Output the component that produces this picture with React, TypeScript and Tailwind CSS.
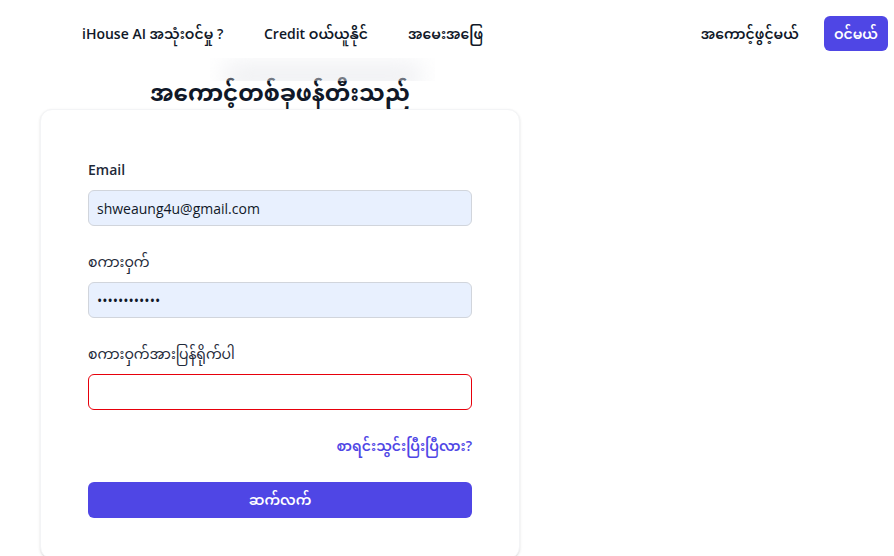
import React from 'react';

const font = { fontFamily: '"Open Sans", "Noto Sans", "Noto Sans Myanmar", Padauk, "Myanmar Text", sans-serif' };

function Field({ label, type, value, bold, error }: { label: string; type: string; value: string; bold?: boolean; error?: boolean }) {
  return (
    <div className="flex flex-col">
      <label className={`text-sm leading-5 mb-[10px] ${bold ? 'font-semibold text-gray-800' : 'text-gray-800'}`}>{label}</label>
      <input
        type={type}
        defaultValue={value}
        readOnly
        className={`h-[36px] w-full rounded-md px-2 text-sm text-gray-900 outline-none ${
          error ? 'border border-red-600 bg-white' : 'border border-gray-300 bg-[#e8f0fe]'
        }`}
      />
    </div>
  );
}

export default function App() {
  return (
    <div className="relative min-h-[556px] w-[894px] overflow-hidden bg-white" style={font}>
      {/* header */}
      <header className="flex h-[67px] items-center justify-between pl-[82px] pr-[6px]">
        <nav className="flex items-center text-sm font-semibold whitespace-nowrap text-gray-900">
          <a className="w-[182px]">iHouse AI အသုံးဝင်မှု ?</a>
          <a className="w-[144px]">Credit ဝယ်ယူနိုင်</a>
          <a>အမေးအဖြေ</a>
        </nav>
        <div className="flex items-center gap-[25px] text-sm font-semibold whitespace-nowrap">
          <a className="text-gray-900">အကောင့်ဖွင့်မယ်</a>
          <button className="h-[35px] rounded-md bg-[#4f46e5] px-[10px] text-white">ဝင်မယ်</button>
        </div>
      </header>

      {/* faint blurred strip above title */}
      <div className="pointer-events-none absolute left-[210px] top-[58px] h-[23px] w-[225px] overflow-hidden">
        <div className="mx-[12px] mt-[6px] h-[24px] rounded-full bg-gray-200/70 blur-md" />
      </div>

      <main className="w-[480px] ml-[40px]">
        <h1 className="mt-[9px] h-[33px] text-center text-[23px] font-bold leading-[32px] text-gray-900">
          အကောင့်တစ်ခုဖန်တီးသည်
        </h1>

        <div className="relative rounded-xl border border-gray-100 bg-white px-[47px] pt-[50px] pb-10 shadow-sm">
          <div className="flex flex-col gap-[26px]">
            <Field label="Email" type="email" value="shweaung4u@gmail.com" bold />
            <Field label="စကားဝှက်" type="password" value="xxxxxxxxxxxx" />
            <Field label="စကားဝှက်အားပြန်ရိုက်ပါ" type="password" value="" error />
            <div className="text-right text-sm font-semibold leading-5 text-[#4f46e5]">
              <a>စာရင်းသွင်းပြီးပြီလား?</a>
            </div>
            <button className="h-[36px] w-full rounded-md bg-[#4f46e5] text-sm font-semibold text-white">ဆက်လက်</button>
          </div>
        </div>
      </main>
    </div>
  );
}
